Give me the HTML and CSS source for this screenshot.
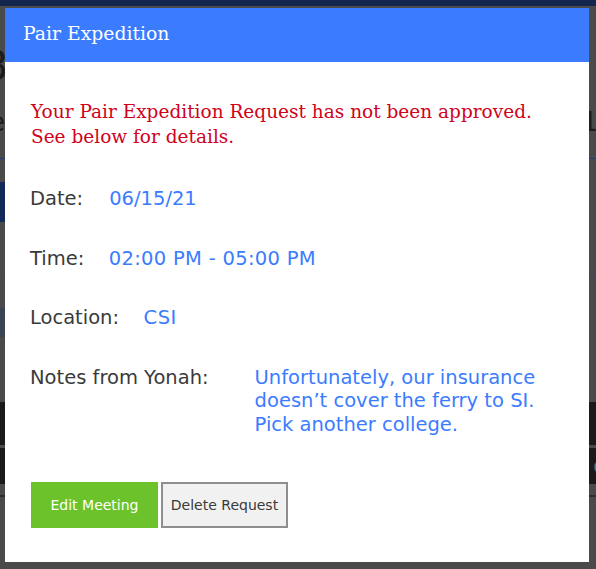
FILE: index.html
```html
<!DOCTYPE html>
<html>
<head>
<meta charset="utf-8">
<link rel="stylesheet" href="styles.css">
</head>
<body>
<div class="backdrop">
  <div class="bd-top"></div>
  <div class="bd-row bd-r1"><span class="bd-g3">3</span></div>
  <div class="bd-row bd-r2"><span class="bd-ge">e</span><span class="bd-g1">1</span></div>
  <div class="bd-line bd-l1"></div>
  <div class="bd-left-block"><div class="bd-nav">‹</div></div>
  <div class="bd-line bd-l2"></div>
  <div class="bd-left-block2"><div class="bd-slate"></div></div>
  <div class="bd-dark bd-d1"></div>
  <div class="bd-dark bd-d2"><span class="bd-gc">c</span></div>
  <div class="bd-line bd-l3"></div>
</div>

<div class="modal">
  <div class="modal-header">Pair Expedition</div>
  <div class="modal-body">
    <p class="alert">Your Pair Expedition Request has not been approved. See below for details.</p>
    <div class="row"><span class="label">Date:</span><span class="value v-date">06/15/21</span></div>
    <div class="row"><span class="label">Time:</span><span class="value v-time">02:00 PM - 05:00 PM</span></div>
    <div class="row"><span class="label">Location:</span><span class="value v-loc">CSI</span></div>
    <div class="row notes"><span class="label">Notes from Yonah:</span><span class="value v-notes">Unfortunately, our insurance doesn’t cover the ferry to SI. Pick another college.</span></div>
    <div class="actions">
      <button class="btn btn-edit">Edit Meeting</button>
      <button class="btn btn-delete">Delete Request</button>
    </div>
  </div>
</div>
</body>
</html>
```
FILE: styles.css
```css
html, body {
  margin: 0;
  padding: 0;
}
body {
  width: 596px;
  height: 569px;
  overflow: hidden;
  background: #4a4a4a;
  position: relative;
  font-family: "DejaVu Sans", Verdana, sans-serif;
}
.backdrop {
  display: flex;
  flex-direction: column;
}
.bd-top {
  height: 6px;
  background: #15264c;
}
.bd-row {
  display: flex;
  justify-content: space-between;
  color: #1c1c1c;
}
.bd-r1 {
  margin-top: 42px;
  height: 36px;
  font-size: 40px;
  line-height: 36px;
}
.bd-g3 { margin-left: -17px; }
.bd-r2 {
  margin-top: 20px;
  height: 36px;
  font-size: 26px;
  line-height: 36px;
}
.bd-ge { margin-left: -11px; }
.bd-g1 { margin-right: -2px; }
.bd-line {
  height: 1px;
}
.bd-l1 { margin-top: 18px; background: #1f3c80; }
.bd-left-block {
  margin-top: 23px;
  height: 40px;
}
.bd-nav {
  width: 20px;
  height: 40px;
  background: #13295a;
  color: #6c7590;
  font-size: 24px;
  line-height: 40px;
  text-align: right;
  margin-left: -5px;
}
.bd-l2 { margin-top: 52px; background: #3e4657; }
.bd-left-block2 {
  margin-top: 33px;
  height: 29px;
}
.bd-slate {
  width: 20px;
  height: 29px;
  background: #3c4352;
}
.bd-dark {
  background: #1a1a1a;
}
.bd-d1 { margin-top: 65px; height: 43px; }
.bd-d2 {
  margin-top: 3px;
  height: 36px;
  display: flex;
  justify-content: flex-end;
  color: #6a6a6a;
  font-size: 22px;
  line-height: 36px;
}
.bd-gc { margin-right: -9px; }
.bd-l3 { margin-top: 11px; background: #2e2e2e; height: 2px; }

.modal {
  position: absolute;
  left: 5px;
  top: 8px;
  width: 584px;
  height: 554px;
  background: #ffffff;
}
.modal-header {
  height: 54px;
  background: #3b7cff;
  color: #ffffff;
  font-family: "DejaVu Serif", Georgia, serif;
  font-size: 18.8px;
  line-height: 52px;
  padding-left: 18px;
}
.modal-body {
  padding: 37px 31px 0 25px;
}
.alert {
  margin: 0 0 38px 1px;
  color: #d0021b;
  font-family: "DejaVu Serif", Georgia, serif;
  font-size: 18.5px;
  line-height: 25px;
}
.row {
  display: flex;
  font-size: 19.5px;
  line-height: 23.5px;
  margin-bottom: 36px;
}
.label {
  color: #3a3a3a;
  flex: none;
}
.value {
  color: #3b7cff;
}
.v-date { margin-left: 26px; }
.v-time { margin-left: 24.5px; letter-spacing: 0.3px; }
.v-loc { margin-left: 24.5px; letter-spacing: 0.5px; }
.v-notes { margin-left: 46px; flex: 1; }
.notes { margin-bottom: 46px; }
.actions {
  display: flex;
  gap: 3px;
  margin-left: 1px;
}
.btn {
  font-family: "DejaVu Sans", Verdana, sans-serif;
  font-size: 14px;
  height: 46px;
  width: 127px;
  padding: 0;
  margin: 0;
  cursor: pointer;
}
.btn-edit {
  background: #6cc22a;
  color: #ffffff;
  border: none;
}
.btn-delete {
  background: #f1f1f1;
  color: #3a3a3a;
  border: 2px solid #8e8e8e;
}
```
